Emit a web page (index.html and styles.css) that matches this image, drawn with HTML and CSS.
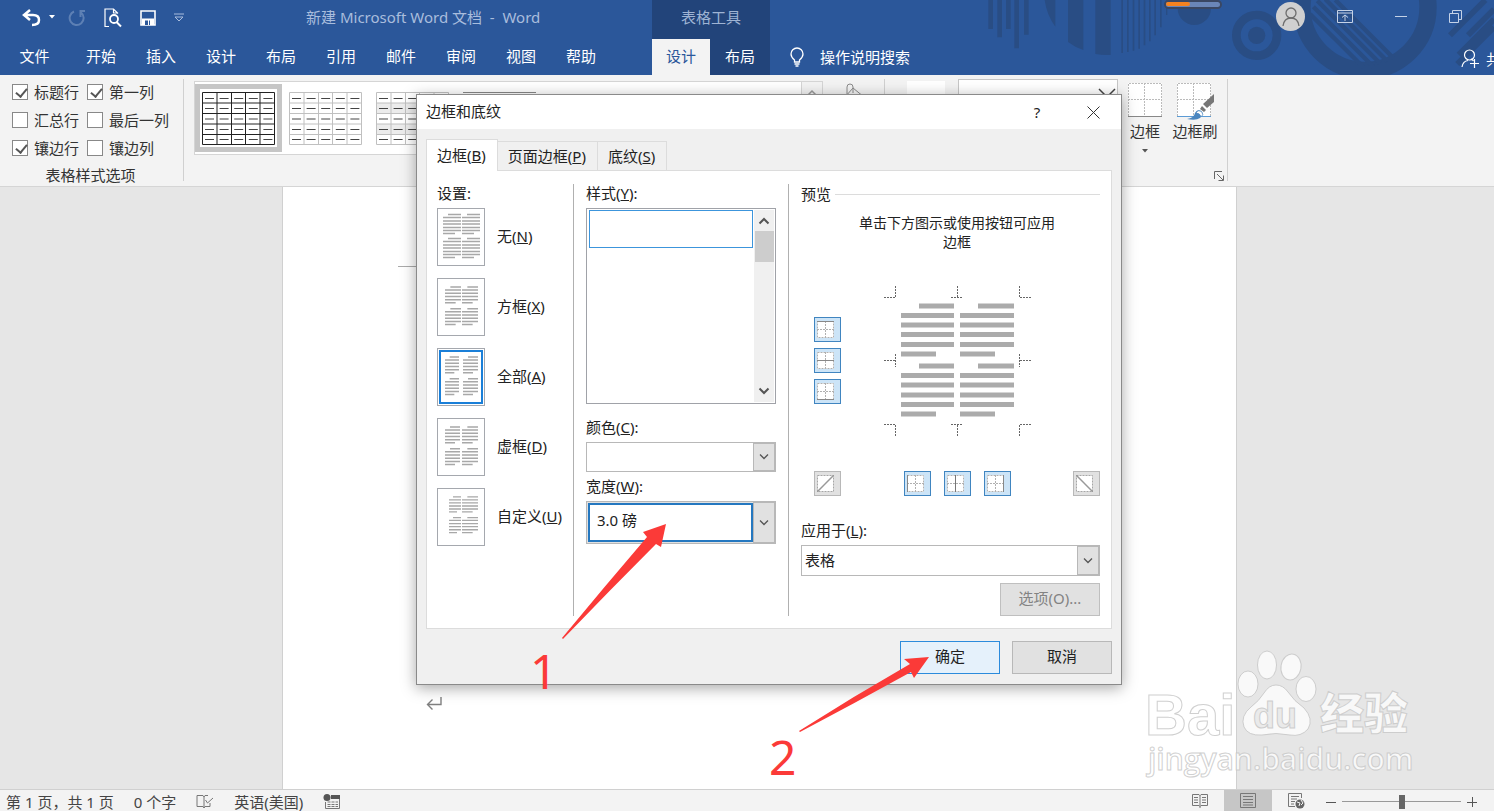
FILE: index.html
```html
<!DOCTYPE html>
<html lang="zh-CN">
<head>
  <meta charset="UTF-8">
  <meta name="viewport" content="width=device-width, initial-scale=1.0">
  <title>新建 Microsoft Word 文档 - Word</title>
  <link rel="stylesheet" href="styles.css">
</head>
<body>
  <!-- Shared drawings -->
  <svg class="defs" aria-hidden="true">
    <symbol id="table-grid" viewBox="0 0 73 53">
      <path d="M.5 .5H72.5V52.5H.5ZM15 0V53M29.500 0V53M43.500 0V53M58 0V53M0 11H73M0 21.500H73M0 32H73M0 42.500H73" fill="none" stroke="currentColor"/>
      <path d="M3 6.500H72M3 16.500H72M3 27H72M3 37.500H72M3 47.500H72" stroke="#444" stroke-dasharray="9 5.600"/>
    </symbol>
    <symbol id="column-wide" viewBox="0 0 18 46">
      <path d="M5 1.500H18M0 4.500H18M0 8H18M0 11H18M0 14.500H18M0 17.500H18M0 20.500H12M5 25.500H18M0 28.500H18M0 32H18M0 35H18M0 38.500H18M0 41.500H18M0 44.500H12" stroke="#a8a8a8" stroke-width="1.400"/>
    </symbol>
    <symbol id="column" viewBox="0 0 15 40" preserveAspectRatio="none">
      <path d="M5 1H15M0 4H15M0 7.300H15M0 10.500H15M0 13.700H15M0 16.700H10M5 22.700H15M0 25.700H15M0 29H15M0 32.300H15M0 35.500H15M0 38.500H10" stroke="#a8a8a8" stroke-width="1.400"/>
    </symbol>
    <symbol id="cells" viewBox="0 0 17 17">
      <path d="M0 0H17V17H0Z" fill="#fff"/>
      <path d="M.5 .5H16.500V16.500H.5ZM8.500 0V17M0 8.500H17" fill="none" stroke="#b0b0b0" stroke-dasharray="2 1"/>
    </symbol>
    <symbol id="chevron" viewBox="0 0 12 8">
      <path d="M2 1.500L6 5.500L10 1.500" fill="none" stroke="currentColor" stroke-width="1.300"/>
    </symbol>
  </svg>

  <div class="app">
    <header class="header">
      <svg class="header-art" viewBox="0 0 1542 225" aria-hidden="true">
        <g fill="#294d84">
          <path d="M25 0H39V87H25ZM52 0H66V112H52ZM78 0H92V87H78ZM103 0H117V145H103ZM132 0H146V104H132Z"/>
          <path d="M194 0H226V80Q200 45 194 0ZM264 0H310V150Q285 142 264 126ZM346 0H392V165Q366 166 346 162Z"/>
          <path d="M424 0H429V159H424ZM441 0H446V156H441ZM458 0H463V152H458ZM475 0H480V146H475ZM491 0H496V136H491ZM507 0H512V124H507ZM523 0H528V106H523ZM540 0H545V82H540ZM558 0H562V45H558Z"/>
          <circle cx="643" cy="25" r="50"/>
          <circle cx="830" cy="106" r="26"/>
        </g>
        <g fill="none" stroke="#294d84">
          <circle cx="830" cy="106" r="61" stroke-width="26"/>
          <circle cx="1155" cy="22" r="189" stroke-width="52"/>
          <path d="M1066 0L1240 174M1036 -2L1222 184M1012 2L1200 190M1000 20L1180 200M990 42L1150 202" stroke-width="13"/>
          <path d="M1410 106L1516 0M1464 106L1542 28M1436 164L1542 58M1432 192L1542 82" stroke-width="17"/>
        </g>
      </svg>
      <div class="progress-pill"><span></span></div>

      <div class="title-row">
        <div class="quick-access">
          <button class="icon-button" aria-label="撤消"><svg width="36" height="20" viewBox="0 0 36 20"><path d="M10 2L4 7L10 12M4.500 7H13Q19 7 19 12Q19 17 12 17" fill="none" stroke="#fff" stroke-width="2.500"/><path d="M29 7H35L32 10.500Z" fill="#fff"/></svg></button>
          <button class="icon-button faded" aria-label="恢复"><svg width="18" height="20" viewBox="0 0 18 20"><path d="M6 3.500A7 7 0 1 0 13 4.500M12.500 9V3H17" fill="none" stroke="#a9bddd" stroke-width="2"/></svg></button>
          <button class="icon-button" aria-label="打印预览"><svg width="18" height="20" viewBox="0 0 18 20"><path d="M5 18.500H1V1H9.500L14 5.500M9.500 1V5H14" fill="none" stroke="#fff" stroke-width="1.200"/><circle cx="10" cy="11" r="4" fill="none" stroke="#fff" stroke-width="1.800"/><path d="M12.500 14L17 18.500" stroke="#fff" stroke-width="2"/></svg></button>
          <button class="icon-button" aria-label="保存"><svg width="16" height="18" viewBox="0 0 16 18"><path d="M1 2H15V16H1Z" fill="none" stroke="#fff" stroke-width="1.600"/><path d="M2 9.500H14V16H2Z" fill="#fff"/><path d="M5 11.500H8V16H5ZM9 11.500H10V16H9Z" fill="#2b579a"/></svg></button>
          <button class="icon-button" aria-label="自定义快速访问工具栏"><svg width="10" height="9" viewBox="0 0 10 9"><path d="M0 1H10M1 4H9L5 8Z" fill="none" stroke="#a9bddd"/></svg></button>
        </div>
        <h1 class="document-title">新建 Microsoft Word 文档&nbsp; -&nbsp; Word</h1>
        <div class="context-title">表格工具</div>
        <div class="window-controls">
          <button class="avatar" aria-label="帐户"><svg width="22" height="22" viewBox="0 0 22 22"><path d="M3 21Q4 13 11 13Q18 13 19 21" fill="none" stroke="#6d6d6d" stroke-width="1.300"/><circle cx="11" cy="8" r="5" fill="none" stroke="#6d6d6d" stroke-width="1.300"/></svg></button>
          <button class="icon-button" aria-label="功能区显示选项"><svg width="16" height="13" viewBox="0 0 16 13"><path d="M.5 .5H15.500V12.500H.5ZM0 3H16M8 11V5M5 7.500L8 5L11 7.500" fill="none" stroke="#c5d2e7"/></svg></button>
          <button class="icon-button" aria-label="最小化"><svg width="12" height="13" viewBox="0 0 12 13"><path d="M0 6.500H12" stroke="#c5d2e7"/></svg></button>
          <button class="icon-button" aria-label="向下还原"><svg width="13" height="13" viewBox="0 0 13 13"><path d="M.5 3.500H9.500V12.500H.5ZM3.500 3V.5H12.500V9.500H10" fill="none" stroke="#c5d2e7"/></svg></button>
        </div>
      </div>

      <nav class="tab-row">
        <a href="#" class="tab file">文件</a>
        <a href="#" class="tab">开始</a>
        <a href="#" class="tab">插入</a>
        <a href="#" class="tab">设计</a>
        <a href="#" class="tab">布局</a>
        <a href="#" class="tab">引用</a>
        <a href="#" class="tab">邮件</a>
        <a href="#" class="tab">审阅</a>
        <a href="#" class="tab">视图</a>
        <a href="#" class="tab">帮助</a>
        <div class="context-tabs">
          <a href="#" class="tab active">设计</a>
          <a href="#" class="tab">布局</a>
        </div>
        <a href="#" class="tell-me">
          <svg width="14" height="20" viewBox="0 0 14 20"><path d="M4.500 15V13Q1 10 1 7A6 6 0 0 1 13 7Q13 10 9.500 13V15ZM4.500 17H9.500M5.500 19H8.500" fill="none" stroke="#fff" stroke-width="1.300"/></svg>
          操作说明搜索
        </a>
        <a href="#" class="share">
          <svg width="18" height="19" viewBox="0 0 18 19"><path d="M1 18Q2 12 7 11.500M10 10Q12 11 12.500 12" fill="none" stroke="#fff" stroke-width="1.200"/><circle cx="8.500" cy="6" r="5" fill="none" stroke="#fff" stroke-width="1.200"/><path d="M9 14.500H18M13.500 10V19" stroke="#fff" stroke-width="1.200"/></svg>
          共享
        </a>
      </nav>
    </header>

    <section class="ribbon">
      <div class="group table-options">
        <div class="checks">
          <label><input type="checkbox" checked>标题行</label>
          <label><input type="checkbox" checked>第一列</label>
          <label><input type="checkbox">汇总行</label>
          <label><input type="checkbox">最后一列</label>
          <label><input type="checkbox" checked>镶边行</label>
          <label><input type="checkbox">镶边列</label>
        </div>
        <div class="group-name">表格样式选项</div>
      </div>
      <div class="gallery">
        <button class="style selected" aria-label="网格型"><svg width="73" height="53"><use href="#table-grid"/></svg></button>
        <button class="style" aria-label="网格型浅色"><svg width="73" height="53"><use href="#table-grid"/></svg></button>
        <button class="style" aria-label="无格式表格 1"><svg width="73" height="53"><path d="M0 11H73V21H0ZM0 32H73V42H0Z" fill="#ececec"/><use href="#table-grid"/></svg></button>
        <button class="style" aria-label="无格式表格 2"><svg width="73" height="53"><path d="M0 .5H73" stroke="#888"/></svg></button>
        <button class="gallery-up" aria-label="上一行"><svg width="12" height="8" viewBox="0 0 12 8"><path d="M2 6L6 2L10 6" fill="none" stroke="#999" stroke-width="1.500"/></svg></button>
      </div>
      <div class="group shading">
        <svg width="24" height="24" viewBox="0 0 24 24"><path d="M2 14V4Q2 1 5 1T8 4V10M0 14L8 5L19 14L10 22Z" fill="none" stroke="#8a8a8a"/></svg>
      </div>
      <div class="group border-style">
        <span class="border-styles-icon"></span>
        <div class="line-style"><svg width="20" height="12" viewBox="0 0 20 12"><path d="M2 2L10 10L18 2" fill="none" stroke="#444" stroke-width="1.500"/></svg></div>
        <button class="large-button">
          <svg width="34" height="34" viewBox="0 0 34 34"><path d="M0 0H34V34H0Z" fill="#fff"/><path d="M.5 33V.5H33.500V33M16.500 0V33M0 16.500H34" fill="none" stroke="#bbb" stroke-dasharray="2 1"/><path d="M0 33.500H34" stroke="#888"/></svg>
          <span>边框</span>
          <svg width="6" height="4" viewBox="0 0 6 4"><path d="M0 0H6L3 3.500Z" fill="#555"/></svg>
        </button>
        <button class="large-button">
          <svg width="37" height="37" viewBox="0 0 37 37" class="painter"><path d="M0 0H34V34H0Z" fill="#fff"/><path d="M.5 33V.5H33.500V33M16.500 0V33M0 16.500H34" fill="none" stroke="#bbb" stroke-dasharray="2 1"/><path d="M0 33.500H34" stroke="#5b9bd5"/><path d="M37 11V19L30 25L26 21ZM25 23L29 27L27 29L23 26Z" fill="#777"/><path d="M10 36Q17 35 18 30Q20 26 24 28Q27 32 23 35Q19 38 10 36Z" fill="#4a86bf"/><path d="M19 30Q21 26 25 29Q27 32 24 34Q23 30 19 30Z" fill="#fff" stroke="#4a86bf" stroke-width=".8"/></svg>
          <span>边框刷</span>
        </button>
        <button class="launcher" aria-label="边框和底纹"><svg width="10" height="10" viewBox="0 0 10 10"><path d="M.5 8V.5H8M3 3L9 9M9.500 4.500V9.500H4.500" fill="none" stroke="#666"/></svg></button>
      </div>
    </section>

    <main class="workspace">
      <div class="page">
        <div class="header-mark"></div>
        <svg class="paragraph-mark" width="16" height="14" viewBox="0 0 16 14"><path d="M15 0V7.500H2M6.500 2.500L1.500 7.500L6.500 12.500" fill="none" stroke="#808080" stroke-width="1.400"/></svg>
      </div>
      <svg class="watermark" width="290" height="140" viewBox="0 0 290 140">
        <g fill="#fff" fill-opacity=".75" stroke="#c4c4c4" stroke-opacity=".8">
          <text x="5" y="93" class="wm-bai">Bai</text>
          <g transform="translate(-10 -3)">
            <ellipse cx="118" cy="45" rx="10" ry="13"/>
            <ellipse cx="137" cy="26" rx="9.500" ry="14"/>
            <ellipse cx="161" cy="28" rx="10" ry="13" transform="rotate(10 161 28)"/>
            <ellipse cx="176" cy="50" rx="10" ry="12.500"/>
            <path d="M146 46Q153 46 158 53Q164 62 174 69Q184 80 178 90Q171 98 160 96Q146 93 132 96Q118 97 114 88Q110 77 121 68Q129 62 134 54Q139 46 146 46Z"/>
          </g>
          <text x="113" y="86" class="wm-du">du</text>
          <text x="180" y="88" class="wm-cn">经验</text>
          <text x="8" y="128" class="wm-url">jingyan.baidu.com</text>
        </g>
      </svg>
    </main>

    <footer class="status-bar">
      <span>第 1 页，共 1 页</span>
      <span>0 个字</span>
      <svg width="18" height="15" viewBox="0 0 18 15"><path d="M12 1.500H9L8 3L7 1.500H1V12.500H7L8 14L9 12.500H14V9M8 3V14M9.500 6L11.500 9L17 4" fill="none" stroke="#777"/></svg>
      <span>英语(美国)</span>
      <svg width="17" height="15" viewBox="0 0 17 15"><circle cx="4" cy="3.500" r="3.500" fill="#555"/><path d="M8 1H17V5H8Z" fill="#555"/><path d="M2.500 8V14.500H16.500V5" fill="none" stroke="#777"/><path d="M4.500 8H15M4.500 10.500H15M4.500 12.500H15" stroke="#777" stroke-dasharray="3 1"/></svg>
      <div class="views">
        <button aria-label="阅读视图"><svg width="16" height="15" viewBox="0 0 16 15"><path d="M8 2.500L7 1.500H.5V12.500H7L8 13.500L9 12.500H15.500V1.500H9ZM8 2V15M2 4.500H6M2 7H6M2 9.500H6M10 4.500H14M10 7H14M10 9.500H14" fill="none" stroke="#777"/></svg></button>
        <button class="active" aria-label="页面视图"><svg width="16" height="15" viewBox="0 0 16 15"><path d="M.5 .5H15.500V14.500H.5ZM3 3.500H13M3 6.500H13M3 9.500H13M3 12H13" fill="none" stroke="#777"/></svg></button>
        <button aria-label="Web 版式视图"><svg width="17" height="16" viewBox="0 0 17 16"><path d="M7 13.500H.5V.5H13.500V5M3 3.500H11M3 6H9M3 8.500H7M3 11H6" fill="none" stroke="#777"/><circle cx="12" cy="11" r="4.500" fill="#666"/><path d="M9 9L12 10L11 13M13 7L15 10L13 12" fill="none" stroke="#f3f3f3"/></svg></button>
      </div>
      <div class="zoom">
        <button aria-label="缩小"><svg width="10" height="10" viewBox="0 0 10 10"><path d="M0 5.500H10" stroke="#555"/></svg></button>
        <input type="range" min="0" max="100" value="50" aria-label="显示比例">
        <button aria-label="放大"><svg width="10" height="10" viewBox="0 0 10 10"><path d="M0 5.500H10M5.500 0V10" stroke="#555"/></svg></button>
      </div>
    </footer>

    <div class="dialog" role="dialog" aria-labelledby="dialog-title">
      <div class="dialog-bar">
        <h2 id="dialog-title">边框和底纹</h2>
        <button aria-label="帮助">?</button>
        <button aria-label="关闭"><svg width="13" height="13" viewBox="0 0 13 13"><path d="M.5 .5L12.500 12.500M12.500 .5L.5 12.500" stroke="#333"/></svg></button>
      </div>
      <div class="dialog-body">
        <div class="dialog-tabs" role="tablist">
          <button class="dialog-tab current" role="tab" aria-selected="true">边框(<u>B</u>)</button>
          <button class="dialog-tab" role="tab">页面边框(<u>P</u>)</button>
          <button class="dialog-tab" role="tab">底纹(<u>S</u>)</button>
        </div>

        <div class="panel">
          <div class="settings">
            <div class="caption">设置:</div>
            <label class="setting">
              <input type="radio" name="setting">
              <span class="thumb"><svg width="46" height="56"><use href="#column-wide" x="5" y="4" width="18" height="46"/><use href="#column-wide" x="24" y="4" width="18" height="46"/></svg></span>
              <span class="setting-name">无(<u>N</u>)</span>
            </label>
            <label class="setting">
              <input type="radio" name="setting">
              <span class="thumb"><svg width="46" height="56"><use href="#column" x="7" y="7" width="16" height="40"/><use href="#column" x="24" y="7" width="16" height="40"/></svg></span>
              <span class="setting-name">方框(<u>X</u>)</span>
            </label>
            <label class="setting">
              <input type="radio" name="setting" checked>
              <span class="thumb"><svg width="46" height="56"><use href="#column" x="7" y="7" width="14" height="40"/><use href="#column" x="25" y="7" width="15" height="40"/></svg></span>
              <span class="setting-name">全部(<u>A</u>)</span>
            </label>
            <label class="setting">
              <input type="radio" name="setting">
              <span class="thumb"><svg width="46" height="56"><use href="#column" x="7" y="7" width="15" height="40"/><use href="#column" x="24" y="7" width="16" height="40"/></svg></span>
              <span class="setting-name">虚框(<u>D</u>)</span>
            </label>
            <label class="setting">
              <input type="radio" name="setting">
              <span class="thumb"><svg width="46" height="56"><use href="#column" x="11" y="7" width="12" height="38"/><use href="#column" x="24" y="7" width="16" height="38"/></svg></span>
              <span class="setting-name">自定义(<u>U</u>)</span>
            </label>
          </div>

          <div class="line">
            <div class="caption" id="style-caption">样式(<u>Y</u>):</div>
            <div class="listbox" role="listbox" aria-labelledby="style-caption">
              <div class="option" role="option" aria-selected="true"></div>
              <div class="scrollbar">
                <svg width="12" height="8" viewBox="0 0 12 8"><path d="M1.500 6.500L6 2L10.500 6.500" fill="none" stroke="#555" stroke-width="2"/></svg>
                <span class="handle"></span>
                <svg width="12" height="8" viewBox="0 0 12 8"><path d="M1.500 1.500L6 6L10.500 1.500" fill="none" stroke="#555" stroke-width="2"/></svg>
              </div>
            </div>
            <label class="caption" for="color">颜色(<u>C</u>):</label>
            <div class="combo">
              <select id="color"><option></option></select>
              <span class="arrow"><svg width="12" height="8"><use href="#chevron"/></svg></span>
            </div>
            <label class="caption" for="width">宽度(<u>W</u>):</label>
            <div class="combo tall">
              <select id="width"><option>3.0 磅</option></select>
              <span class="arrow"><svg width="12" height="8"><use href="#chevron"/></svg></span>
            </div>
          </div>

          <div class="preview">
            <div class="caption ruled">预览</div>
            <div class="preview-area">
              <p class="hint">单击下方图示或使用按钮可应用<br>边框</p>
              <div class="stage">
                <div class="side-buttons">
                  <button class="edge on" aria-label="上框线"><svg width="17" height="17"><use href="#cells"/><path d="M0 .5H17" stroke="#888"/></svg></button>
                  <button class="edge on" aria-label="内部横框线"><svg width="17" height="17"><use href="#cells"/><path d="M0 8.500H17" stroke="#888"/></svg></button>
                  <button class="edge on" aria-label="下框线"><svg width="17" height="17"><use href="#cells"/><path d="M0 16.500H17" stroke="#888"/></svg></button>
                </div>
                <svg class="sample" width="150" height="150" viewBox="0 0 150 150">
                  <path d="M37 20H72M19 29.500H72M19 39H72M19 48.500H72M19 58.500H72M19 68H54M37 80H72M19 89.500H72M19 99H72M19 109H72M19 118.500H72M19 128H54" stroke="#ababab" stroke-width="5"/>
                  <path d="M96 20H132M78 29.500H132M78 39H132M78 48.500H132M78 58.500H132M78 68H113M96 80H132M78 89.500H132M78 99H132M78 109H132M78 118.500H132M78 128H113" stroke="#ababab" stroke-width="5"/>
                  <path d="M2 11.500H13.500V0M69 11.500H81M75.500 0V11M149 11.500H137.500V0M2 74.500H13M13.500 68V81M149 74.500H138M137.500 68V81M2 138.500H13.500V150M69 138.500H81M75.500 139V150M149 138.500H137.500V150" fill="none" stroke="#666" stroke-dasharray="2 1"/>
                </svg>
              </div>
              <div class="bottom-buttons">
                <button class="edge" aria-label="斜上框线"><svg width="17" height="17"><path d="M.5 .5H16.500V16.500H.5Z" fill="#fff" stroke="#a6a6a6" stroke-dasharray="2 1"/><path d="M0 17L17 0" stroke="#999" stroke-width="1.500"/></svg></button>
                <div class="vertical-buttons">
                  <button class="edge on" aria-label="左框线"><svg width="17" height="17"><use href="#cells"/><path d="M.5 0V17" stroke="#888"/></svg></button>
                  <button class="edge on" aria-label="内部竖框线"><svg width="17" height="17"><use href="#cells"/><path d="M8.500 0V17" stroke="#777"/></svg></button>
                  <button class="edge on" aria-label="右框线"><svg width="17" height="17"><use href="#cells"/><path d="M16.500 0V17" stroke="#888"/></svg></button>
                </div>
                <button class="edge" aria-label="斜下框线"><svg width="17" height="17"><path d="M.5 .5H16.500V16.500H.5Z" fill="#fff" stroke="#a6a6a6" stroke-dasharray="2 1"/><path d="M0 0L17 17" stroke="#999" stroke-width="1.500"/></svg></button>
              </div>
            </div>
            <label class="caption" for="apply">应用于(<u>L</u>):</label>
            <div class="combo apply">
              <select id="apply"><option>表格</option></select>
              <span class="arrow"><svg width="12" height="8"><use href="#chevron"/></svg></span>
            </div>
            <button class="push options" disabled>选项(O)...</button>
          </div>
        </div>

        <div class="dialog-footer">
          <button class="push default">确定</button>
          <button class="push">取消</button>
        </div>
      </div>
    </div>

    <!-- Step markers -->
    <svg class="steps" width="400" height="270" viewBox="540 515 400 270">
      <path d="M666 524L661 547L656 544Q610 590 563 639L562 638Q605 586 647 537L643 532Z"/>
      <path d="M929 657L914 678L911 672Q855 703 800 732L799 731Q854 696 910 664L904 659Z"/>
      <text x="530" y="689">1</text>
      <text x="769" y="775">2</text>
    </svg>
  </div>
</body>
</html>
```
FILE: styles.css
```css
* {
  margin: 0;
  padding: 0;
  box-sizing: border-box;
}
body {
  font-family: "Noto Sans", "Noto Sans CJK SC", sans-serif;
  font-size: 15px;
  line-height: 20px;
  color: #333;
}
button, select, input {
  font: inherit;
  color: inherit;
}
button {
  background: none;
  border: none;
}
a {
  color: inherit;
  text-decoration: none;
}
svg {
  display: block;
  flex: none;
}
.defs {
  position: absolute;
  width: 0;
  height: 0;
}
.app {
  position: relative;
  display: flex;
  flex-direction: column;
  height: 100vh;
  overflow: hidden;
}

/* Header */
.header {
  position: relative;
  background: #2b579a;
  color: #fff;
  overflow: hidden;
}
.header-art {
  position: absolute;
  top: 0;
  right: 0;
  width: 514px;
  height: 75px;
}
.progress-pill {
  position: absolute;
  top: 0;
  right: 272px;
  width: 58px;
  height: 9px;
  border-radius: 5px;
  background: #6a86b8;
  border: 2px solid #3a4763;
}
.progress-pill span {
  display: block;
  width: 24px;
  height: 4px;
  border-radius: 2px;
  background: #f58220;
}
.title-row, .tab-row {
  position: relative;
  display: flex;
}
.title-row {
  height: 39px;
}
.tab-row {
  height: 36px;
}
.quick-access {
  flex: 0 0 306px;
  display: flex;
  align-items: center;
  gap: 18px;
  padding: 0 0 4px 20px;
}
.quick-access .icon-button:first-child {
  margin-right: -6px;
}
.faded {
  opacity: 0.4;
}
.document-title {
  flex: 0 0 346px;
  font-size: 15px;
  font-weight: 400;
  line-height: 34px;
  color: #a9bddd;
  white-space: nowrap;
}
.context-title {
  flex: 0 0 118px;
  background: #22447a;
  color: #9fb4d4;
  line-height: 34px;
  text-align: center;
}
.window-controls {
  display: flex;
  align-items: center;
  gap: 42px;
  height: 32px;
  margin-left: auto;
  padding-right: 32px;
}
.avatar {
  display: flex;
  justify-content: center;
  align-items: center;
  width: 29px;
  height: 29px;
  margin-right: -10px;
  border-radius: 50%;
  background: #d0d0d0;
}
.tab {
  width: 60px;
  line-height: 34px;
  text-align: center;
}
.tab.file {
  width: 71px;
  padding-right: 2px;
}
.context-tabs {
  display: flex;
  margin-left: 41px;
  width: 118px;
  background: #22447a;
}
.tab.active {
  width: 58px;
  background: #f3f3f3;
  color: #2b579a;
}
.tell-me {
  display: flex;
  align-items: center;
  gap: 16px;
  padding-left: 20px;
  line-height: 34px;
}
.share {
  display: flex;
  align-items: center;
  gap: 7px;
  width: 33px;
  margin-left: auto;
  padding-top: 3px;
  white-space: nowrap;
}

/* Ribbon */
.ribbon {
  display: flex;
  height: 112px;
  padding: 4px 0 5px;
  background: #f3f3f3;
  border-bottom: 1px solid #d5d5d5;
}
.group {
  border-right: 1px solid #d0d0d0;
}
.table-options {
  width: 184px;
  padding: 3px 0 0 12px;
}
.checks {
  display: grid;
  grid-template-columns: 75px 1fr;
  row-gap: 8px;
}
.checks label {
  display: flex;
  align-items: center;
  gap: 6px;
  white-space: nowrap;
}
.checks input {
  appearance: none;
  position: relative;
  width: 16px;
  height: 16px;
  background: #fff;
  border: 1px solid #888;
}
.checks input:checked::after {
  content: "";
  position: absolute;
  left: 5px;
  top: 1px;
  width: 5px;
  height: 9px;
  border: solid #555;
  border-width: 0 2px 2px 0;
  transform: rotate(40deg);
}
.group-name {
  margin: 7px 14px 0 0;
  text-align: center;
}
.gallery {
  display: flex;
  align-items: flex-start;
  flex: 0 0 629px;
  height: 74px;
  margin: 2px 0 0 10px;
  background: #fff;
  border: 1px solid #d5d5d5;
}
.style {
  width: 87px;
  height: 68px;
  padding: 7px;
  margin-top: 2px;
  color: #c0c0c0;
}
.style.selected {
  padding: 3px 2px;
  border: 5px solid #c6c6c6;
  color: #222;
}
.gallery-up {
  width: 21px;
  height: 100%;
  margin-left: auto;
  padding: 7px 4px;
  background: #f3f3f3;
  border-left: 1px solid #d5d5d5;
  align-self: stretch;
  display: flex;
}
.shading {
  width: 62px;
  padding: 4px 0 0 22px;
}
.border-style {
  display: flex;
  align-items: flex-start;
  width: 343px;
}
.border-styles-icon {
  width: 38px;
  height: 30px;
  margin: 2px 13px 0 22px;
  background: #fff;
}
.line-style {
  display: flex;
  justify-content: flex-end;
  width: 160px;
  height: 28px;
  margin-right: 2px;
  padding: 7px 0 0;
  background: #fff;
  border: 1px solid #c6c6c6;
}
.large-button {
  display: flex;
  flex-direction: column;
  align-items: center;
  gap: 4px;
  width: 50px;
  padding-top: 4px;
  white-space: nowrap;
}
.large-button svg:last-child {
  margin-top: 4px;
}
.large-button .painter {
  margin-bottom: -3px;
}
.launcher {
  align-self: flex-end;
  margin-left: -6px;
}

/* Document */
.workspace {
  position: relative;
  flex: 1;
  min-height: 0;
  background: #e6e6e6;
}
.page {
  height: 100%;
  margin: 0 257px 0 282px;
  padding: 79px 0 0 115px;
  background: #fff;
  border: solid #d0d0d0;
  border-width: 0 1px;
}
.header-mark {
  width: 20px;
  height: 1px;
  background: #aaa;
}
.paragraph-mark {
  margin: 430px 0 0 28px;
}
.watermark {
  position: absolute;
  right: 64px;
  bottom: 7px;
}
.wm-bai, .wm-du {
  font-family: "Liberation Sans", sans-serif;
  font-weight: 700;
  font-size: 58px;
}
.wm-du {
  font-size: 36px;
  fill: #e6e6e6;
}
.wm-cn {
  font-family: "Noto Sans CJK SC", sans-serif;
  font-weight: 900;
  font-size: 44px;
}
.wm-url {
  font-family: "Open Sans", sans-serif;
  font-weight: 600;
  font-size: 30px;
}

/* Status bar */
.status-bar {
  display: flex;
  align-items: center;
  gap: 20px;
  height: 22px;
  padding: 2px 17px 0 6px;
  background: #f3f3f3;
  border-top: 1px solid #d0d0d0;
  color: #444;
  white-space: nowrap;
}
.views {
  display: flex;
  align-self: stretch;
  margin: -2px 0 0 auto;
}
.views button {
  display: flex;
  justify-content: center;
  align-items: center;
  width: 48px;
}
.views .active {
  background: #c6c6c6;
}
.zoom {
  display: flex;
  align-items: center;
  gap: 6px;
  margin-left: -14px;
}
.zoom input {
  appearance: none;
  width: 119px;
  height: 14px;
  background: linear-gradient(#999, #999) center / 100% 1px no-repeat;
}
.zoom input::-webkit-slider-thumb {
  appearance: none;
  width: 6px;
  height: 14px;
  background: #666;
}

/* Dialog */
.dialog {
  position: absolute;
  top: 94px;
  left: 416px;
  width: 706px;
  background: #f0f0f0;
  border: 1px solid #8a8a8a;
  box-shadow: 0 3px 14px rgba(0, 0, 0, 0.35);
  color: #222;
}
.dialog-bar {
  display: flex;
  align-items: center;
  height: 34px;
  padding-left: 9px;
  background: #fff;
}
.dialog-bar h2 {
  flex: 1;
  padding-bottom: 2px;
  font-size: 15px;
  font-weight: 400;
}
.dialog-bar button {
  display: flex;
  justify-content: center;
  align-items: center;
  width: 56px;
  height: 34px;
}
.dialog-body {
  padding: 10px 9px;
}
.dialog-tabs {
  display: flex;
  align-items: flex-end;
  height: 31px;
}
.dialog-tab {
  height: 29px;
  padding: 0 11px 0 10px;
  border: 1px solid #dcdcdc;
  border-width: 1px 1px 0 0;
  white-space: nowrap;
}
.dialog-tab.current {
  position: relative;
  height: 32px;
  padding-bottom: 1px;
  margin-bottom: -1px;
  background: #fff;
  border-left-width: 1px;
}
.panel {
  display: grid;
  grid-template-columns: 147px 215px 1fr;
  padding: 13px 11px 12px 0;
  background: #fff;
  border: 1px solid #dcdcdc;
}
.caption {
  display: block;
  height: 20px;
  line-height: 18px;
}
.settings {
  display: flex;
  flex-direction: column;
  gap: 12px;
  padding-left: 10px;
  border-right: 1px solid #b0b0b0;
}
.settings .caption {
  margin-bottom: -8px;
}
.setting {
  display: flex;
  align-items: center;
  gap: 12px;
  white-space: nowrap;
}
.setting input {
  position: absolute;
  opacity: 0;
}
.setting-name {
  padding-bottom: 2px;
}
.thumb {
  flex: none;
  width: 48px;
  height: 58px;
  border: 1px solid #a5a8ae;
}
.setting input:checked + .thumb {
  outline: 2px solid #1a7fd8;
  outline-offset: -4px;
}
.line {
  padding: 0 12px;
  border-right: 1px solid #b0b0b0;
}
.listbox {
  display: flex;
  height: 196px;
  margin: 4px 0 14px;
  padding: 1px;
  border: 1px solid #a0a2a8;
}
.option {
  flex: 1;
  height: 38px;
  margin: 0 1px;
  border: 1px solid #3c95dc;
}
.scrollbar {
  display: flex;
  flex-direction: column;
  align-items: center;
  width: 20px;
  padding: 7px 0;
  background: #f0f0f0;
}
.handle {
  width: 19px;
  height: 31px;
  margin: 6px 0 auto;
  background: #cdcdcd;
}
.combo {
  position: relative;
  height: 30px;
  margin: 4px 0 5px;
}
.combo select {
  appearance: none;
  display: block;
  width: 100%;
  height: 100%;
  padding-left: 3px;
  background: #fff;
  border: 1px solid #b8b8b8;
}
.arrow {
  position: absolute;
  top: 1px;
  right: 1px;
  bottom: 1px;
  display: flex;
  justify-content: center;
  align-items: center;
  width: 22px;
  background: #e1e1e1;
  border: 1px solid #b8b8b8;
  color: #555;
  pointer-events: none;
}
.combo.tall {
  height: 43px;
  padding: 1px 22px 1px 1px;
  background: #e1e1e1;
  border: 1px solid #b8b8b8;
}
.combo.tall select {
  padding: 0 0 5px 7px;
  border: 2px solid #2578c0;
}
.combo.tall .arrow {
  top: 0;
  right: 0;
  bottom: 0;
}
.preview {
  padding-left: 12px;
}
.ruled {
  display: flex;
  align-items: center;
  gap: 4px;
}
.ruled::after {
  content: "";
  flex: 1;
  height: 1px;
  background: #dcdcdc;
}
.preview-area {
  padding: 9px 0 25px 13px;
}
.hint {
  font-size: 14px;
  line-height: 19px;
  text-align: center;
  margin-bottom: 35px;
}
.stage {
  display: grid;
  grid-template-columns: 27px 1fr 27px;
  margin-bottom: 35px;
}
.side-buttons {
  display: flex;
  flex-direction: column;
  gap: 6px;
  padding-top: 31px;
}
.sample {
  justify-self: center;
}
.edge {
  width: 27px;
  height: 25px;
  padding: 2px;
  background: #e1e1e1;
  border: 1px solid #b8b8b8;
}
.edge.on {
  background: #cce4f7;
  border-color: #4085c0;
}
.bottom-buttons {
  display: flex;
  justify-content: space-between;
}
.vertical-buttons {
  display: flex;
  gap: 13px;
}
.combo.apply {
  height: 31px;
  margin-bottom: 7px;
}
.combo.apply select {
  padding-bottom: 1px;
}
.push {
  display: block;
  width: 100px;
  height: 33px;
  padding-bottom: 3px;
  background: #e1e1e1;
  border: 1px solid #b8b8b8;
}
.push.default {
  background: #e5f1fb;
  border-color: #2b8bdc;
}
.push.options {
  margin-left: auto;
  border-color: #bfbfbf;
  color: #838383;
}
.dialog-footer {
  display: flex;
  justify-content: flex-end;
  gap: 12px;
  margin-top: 12px;
}

/* Step markers */
.steps {
  position: absolute;
  top: 515px;
  left: 540px;
  overflow: visible;
  fill: #fb3a38;
  font-size: 48px;
  pointer-events: none;
}
```
